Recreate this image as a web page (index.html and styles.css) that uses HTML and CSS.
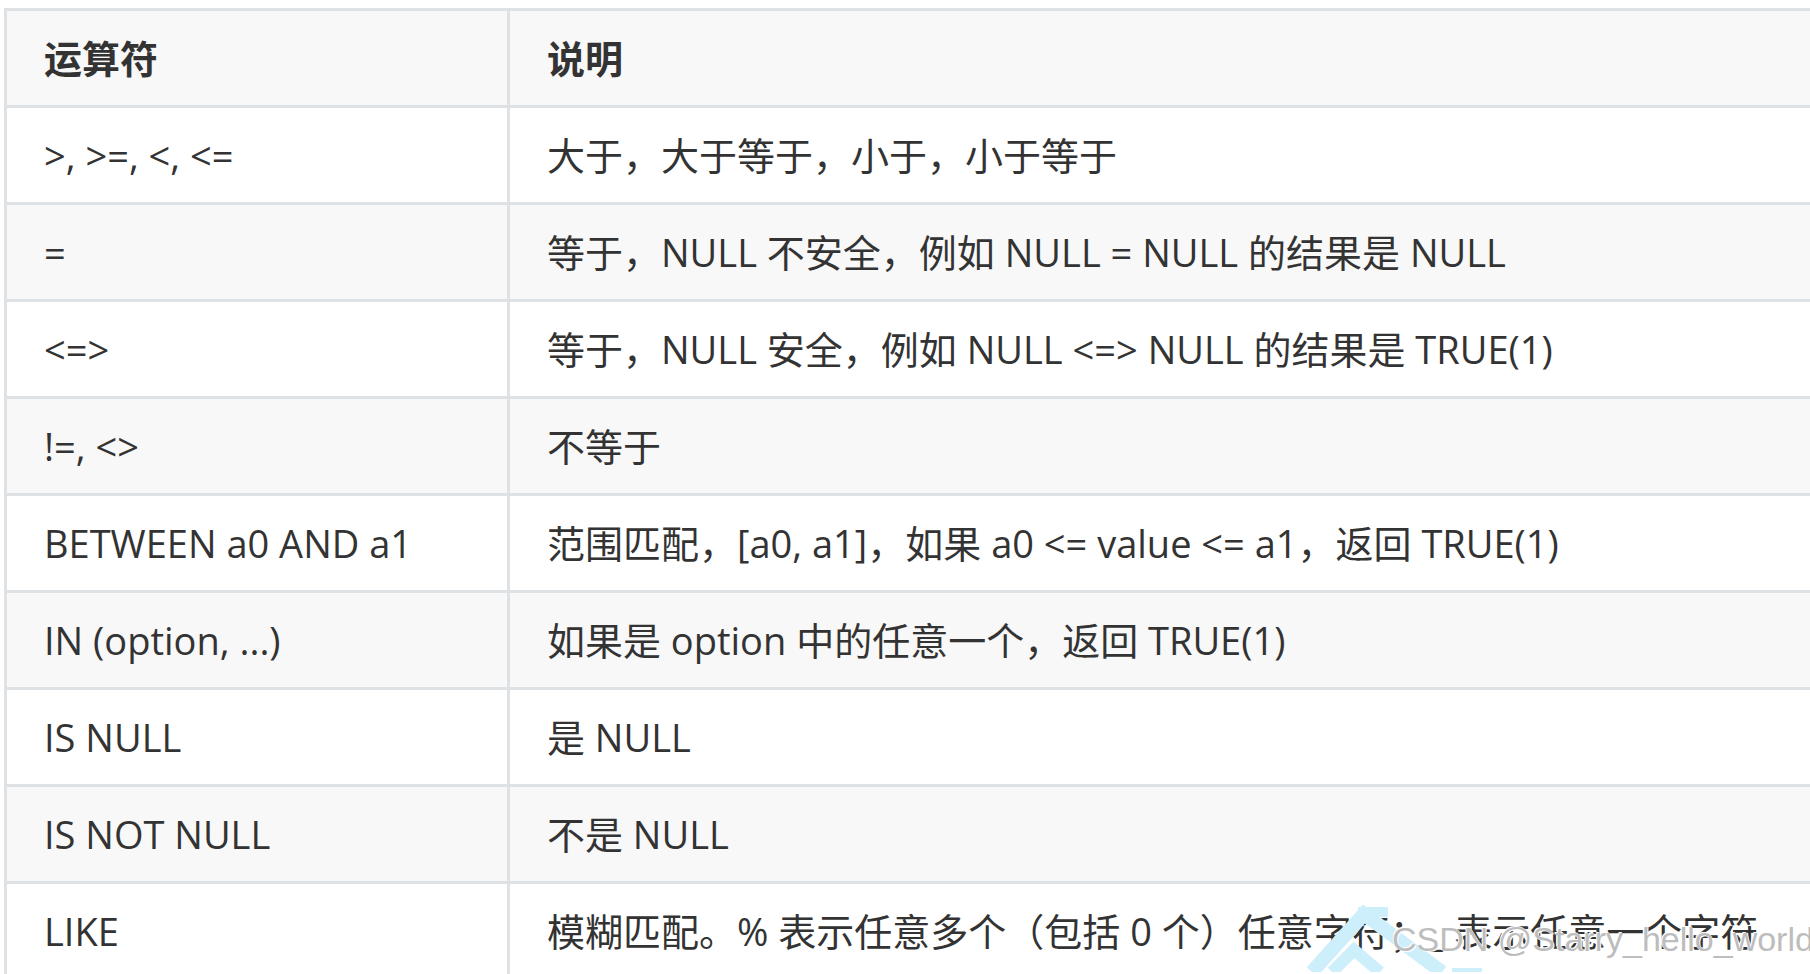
FILE: index.html
```html
<!DOCTYPE html>
<html lang="zh-CN">
<head>
<meta charset="utf-8">
<title>运算符</title>
<link rel="stylesheet" href="styles.css">
</head>
<body>
<div class="page">
  <table class="ops">
    <thead>
      <tr><th class="c1">运算符</th><th class="c2">说明</th></tr>
    </thead>
    <tbody>
      <tr><td>&gt;, &gt;=, &lt;, &lt;=</td><td>大于，大于等于，小于，小于等于</td></tr>
      <tr><td>=</td><td>等于，NULL 不安全，例如 NULL = NULL 的结果是 NULL</td></tr>
      <tr><td>&lt;=&gt;</td><td>等于，NULL 安全，例如 NULL &lt;=&gt; NULL 的结果是 TRUE(1)</td></tr>
      <tr><td>!=, &lt;&gt;</td><td>不等于</td></tr>
      <tr><td>BETWEEN a0 AND a1</td><td>范围匹配，[a0, a1]，如果 a0 &lt;= value &lt;= a1，返回 TRUE(1)</td></tr>
      <tr><td>IN (option, ...)</td><td>如果是 option 中的任意一个，返回 TRUE(1)</td></tr>
      <tr><td>IS NULL</td><td>是 NULL</td></tr>
      <tr><td>IS NOT NULL</td><td>不是 NULL</td></tr>
      <tr><td>LIKE</td><td>模糊匹配。% 表示任意多个（包括 0 个）任意字符；_ 表示任意一个字符</td></tr>
    </tbody>
  </table>
  <svg class="wm-logo" width="200" height="80" viewBox="0 0 200 80">
    <path d="M10 80 L62 22 L140 80" fill="none" stroke="#cdeefb" stroke-width="14"/>
    <path d="M56 20 L86 20" fill="none" stroke="#cdeefb" stroke-width="10"/>
    <path d="M30 80 L52 58 L78 80" fill="none" stroke="#cdeefb" stroke-width="12"/>
    <path d="M150 80 L180 80" fill="none" stroke="#cdeefb" stroke-width="8"/>
  </svg>
  <div class="wm-text">CSDN @Starry_hello_world</div>
</div>
</body>
</html>
```
FILE: styles.css
```css
html, body {
  margin: 0;
  padding: 0;
  background: #ffffff;
}
body {
  width: 1810px;
  height: 974px;
  overflow: hidden;
}
.page {
  position: relative;
  width: 1810px;
  height: 974px;
  overflow: hidden;
  padding: 8px 0 0 4px;
  box-sizing: border-box;
}
.ops {
  border-collapse: separate;
  border-spacing: 0;
  font-family: "Open Sans", "Noto Sans CJK SC", sans-serif;
  font-size: 38px;
  line-height: 64px;
  color: #333333;
  table-layout: fixed;
  width: 2100px;
}
.ops th, .ops td {
  border-left: 3px solid #dfe2e5;
  border-top: 3px solid #dfe2e5;
  padding: 15px 20px 15px 37px;
  text-align: left;
  white-space: nowrap;
  vertical-align: middle;
}
.ops th {
  font-weight: 700;
  background: #f8f8f8;
}
.ops .c1 {
  width: 443px;
}
.ops tbody tr:nth-child(2n) td {
  background: #f8f8f8;
}
.ops tbody tr:nth-child(2n+1) td {
  background: #ffffff;
}
.wm-logo {
  position: absolute;
  left: 1302px;
  top: 892px;
}
.wm-text {
  position: absolute;
  left: 1392px;
  top: 919px;
  font-family: "Liberation Sans", Arial, sans-serif;
  font-size: 34px;
  line-height: 40px;
  color: #bdbdbd;
  white-space: nowrap;
  text-shadow: 1px 1px 0 #ffffff, -1px -1px 0 #ffffff;
}
```
